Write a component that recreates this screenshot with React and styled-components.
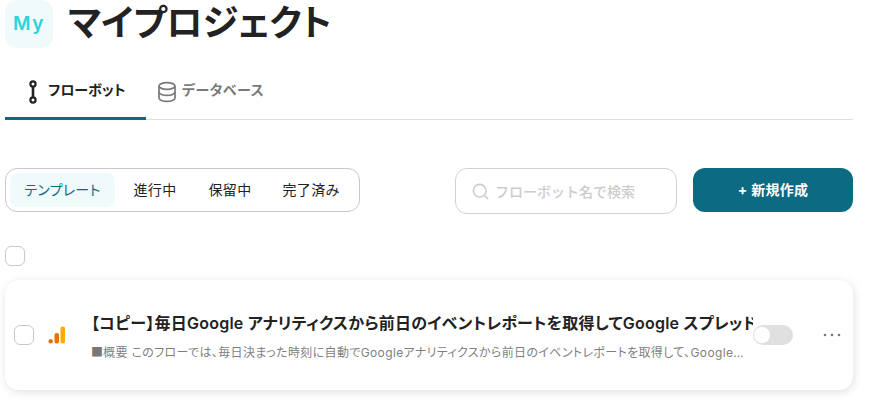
import styled, { createGlobalStyle } from 'styled-components';
import { Search } from 'lucide-react';

const GlobalStyle = createGlobalStyle`
  html, body {
    margin: 0;
    padding: 0;
    height: 100%;
    overflow: hidden;
    background: #fff;
    font-family: Inter, 'Noto Sans CJK JP', sans-serif;
    font-feature-settings: 'palt';
    color: #222;
  }
  * { box-sizing: border-box; }
`;

const Page = styled.div`
  width: 848px;
  margin-left: 5px;
`;

const Header = styled.header`
  display: flex;
  align-items: center;
  gap: 15px;
  height: 48px;
`;

const Logo = styled.div`
  width: 48px;
  height: 48px;
  padding-bottom: 2px;
  border-radius: 12px;
  background: #f0fafa;
  color: #2ed3d8;
  font-size: 19px;
  font-weight: 600;
  letter-spacing: 1.5px;
  display: flex;
  align-items: center;
  justify-content: center;
`;

const Title = styled.h1`
  margin: 0 0 3px;
  font-size: 36px;
  font-weight: 700;
  line-height: 44px;
  letter-spacing: -0.2px;
  color: #222;
`;

const Tabs = styled.nav`
  display: flex;
  height: 72px;
  border-bottom: 1px solid #e0e0e0;
`;

const Tab = styled.div`
  display: flex;
  align-items: center;
  gap: ${(p) => (p.$active ? '5px' : '6px')};
  height: 72px;
  padding: 12px 20px 0 ${(p) => (p.$active ? '18px' : '12px')};
  width: ${(p) => (p.$active ? '141px' : 'auto')};
  font-size: 14px;
  font-weight: 700;
  letter-spacing: ${(p) => (p.$active ? '0' : '0.5px')};
  color: ${(p) => (p.$active ? '#222' : '#7a7a7a')};
  border-bottom: 3px solid ${(p) => (p.$active ? '#0c6a82' : 'transparent')};
`;

const TabIcon = styled.svg`
  flex: none;
  margin-top: 6px;
  fill: none;
`;

const Toolbar = styled.div`
  display: flex;
  align-items: flex-start;
  margin-top: 48px;
`;

const Filters = styled.div`
  display: flex;
  align-items: center;
  width: 355px;
  height: 44px;
  padding: 0 4px;
  border: 1px solid #c8c8c8;
  border-radius: 12px;
`;

const Chip = styled.button`
  flex: none;
  border: none;
  height: 34px;
  width: ${(p) => p.$w}px;
  padding: 0 0 2px;
  border-radius: 8px;
  font: inherit;
  font-size: 14px;
  letter-spacing: 0.02em;
  background: ${(p) => (p.$active ? '#f0fafa' : 'transparent')};
  color: ${(p) => (p.$active ? '#0c6a82' : '#222')};
`;

const SearchBox = styled.div`
  display: flex;
  align-items: center;
  gap: 5px;
  width: 222px;
  height: 46px;
  margin-left: 95px;
  padding-left: 15px;
  border: 1px solid #d0d0d8;
  border-radius: 12px;
  color: #ccc;
  font-size: 14px;
  font-weight: 500;
  font-feature-settings: normal;
`;

const NewButton = styled.button`
  width: 160px;
  height: 44px;
  margin-left: 16px;
  padding: 0 0 2px;
  border: none;
  border-radius: 12px;
  background: #0c6a82;
  color: #fff;
  font: inherit;
  font-size: 14px;
  font-weight: 700;
  letter-spacing: 0.02em;
`;

const Checkbox = styled.span`
  display: block;
  flex: none;
  width: 20px;
  height: 20px;
  border: 1px solid #c8c8c8;
  border-radius: 6px;
  background: #fff;
`;

const SelectAll = styled.div`
  margin-top: 32px;
`;

const Card = styled.article`
  display: flex;
  align-items: center;
  height: 110px;
  margin-top: 14px;
  padding: 0 11px 0 9px;
  border-radius: 14px;
  background: #fff;
  box-shadow: 1px 2px 10px rgba(0, 0, 0, 0.12);
`;

const AppIcon = styled.svg`
  flex: none;
  width: 18px;
  height: 18px;
  margin: 0 25px 0 14px;
`;

const CardBody = styled.div`
  width: 662px;
  flex: none;
  overflow: hidden;
  padding-top: 3px;
`;

const CardTitle = styled.div`
  font-size: 16px;
  font-weight: 600;
  line-height: 22px;
  letter-spacing: 0.24px;
  white-space: nowrap;
  overflow: hidden;
  color: #222;
`;

const CardDesc = styled.div`
  margin-top: 9px;
  width: 658px;
  font-size: 12px;
  line-height: 18px;
  letter-spacing: 0.03em;
  white-space: nowrap;
  overflow: hidden;
  text-overflow: ellipsis;
  color: #7f7f7f;
`;

const Bullet = styled.span`
  font-family: 'Noto Sans CJK JP', sans-serif;
  font-feature-settings: normal;
  letter-spacing: 0;
  color: #777;
`;

const Toggle = styled.span`
  flex: none;
  display: flex;
  align-items: center;
  width: 40px;
  height: 20px;
  padding: 0 1px;
  border-radius: 10px;
  background: #e0e0e0;

  &::before {
    content: '';
    width: 16px;
    height: 16px;
    border-radius: 50%;
    background: #fff;
  }
`;

const MoreDots = styled.svg`
  flex: none;
  width: 18px;
  height: 4px;
  margin-left: 30px;
  fill: #777;
`;

const FlowIcon = () => (
  <TabIcon width="20" height="24" viewBox="0 0 20 24" stroke="#222" strokeWidth="2.2">
    <circle cx="10" cy="4" r="2.6" />
    <circle cx="10" cy="20" r="2.6" />
    <path d="M10 7v10" strokeWidth="2.6" />
  </TabIcon>
);

const DatabaseIcon = () => (
  <TabIcon width="18" height="24" viewBox="0 0 18 24" stroke="#7a7a7a" strokeWidth="1.7">
    <ellipse cx="9" cy="6" rx="8" ry="3.4" />
    <path d="M1 6v12c0 1.9 3.6 3.4 8 3.4s8-1.5 8-3.4V6" />
    <path d="M1 12c0 1.9 3.6 3.4 8 3.4s8-1.5 8-3.4" />
  </TabIcon>
);

const AnalyticsIcon = () => (
  <AppIcon viewBox="0 0 18 18">
    <rect x="12.5" y="0.5" width="4.5" height="17" rx="2" fill="#fbab04" />
    <rect x="6.5" y="7" width="4.5" height="10.5" rx="2" fill="#e37400" />
    <circle cx="2.7" cy="15.3" r="2.2" fill="#e37400" />
  </AppIcon>
);

export default function App() {
  return (
    <Page>
      <GlobalStyle />
      <Header>
        <Logo>My</Logo>
        <Title>マイプロジェクト</Title>
      </Header>
      <Tabs>
        <Tab $active>
          <FlowIcon />
          フローボット
        </Tab>
        <Tab>
          <DatabaseIcon />
          データベース
        </Tab>
      </Tabs>
      <Toolbar>
        <Filters>
          <Chip $active $w={105}>テンプレート</Chip>
          <Chip $w={80}>進行中</Chip>
          <Chip $w={70}>保留中</Chip>
          <Chip $w={92}>完了済み</Chip>
        </Filters>
        <SearchBox>
          <Search size={19} strokeWidth={2} color="#ccc" />
          フローボット名で検索
        </SearchBox>
        <NewButton>+ 新規作成</NewButton>
      </Toolbar>
      <SelectAll>
        <Checkbox />
      </SelectAll>
      <Card>
        <Checkbox />
        <AnalyticsIcon />
        <CardBody>
          <CardTitle>【コピー】毎日Google アナリティクスから前日のイベントレポートを取得してGoogle スプレッドシートに追加する</CardTitle>
          <CardDesc><Bullet>■</Bullet>概要 このフローでは、毎日決まった時刻に自動でGoogleアナリティクスから前日のイベントレポートを取得して、Googleスプレッドシートに自動で追加します。</CardDesc>
        </CardBody>
        <Toggle />
        <MoreDots viewBox="0 0 18 4">
          <circle cx="2" cy="2" r="1.3" />
          <circle cx="9" cy="2" r="1.3" />
          <circle cx="16" cy="2" r="1.3" />
        </MoreDots>
      </Card>
    </Page>
  );
}
